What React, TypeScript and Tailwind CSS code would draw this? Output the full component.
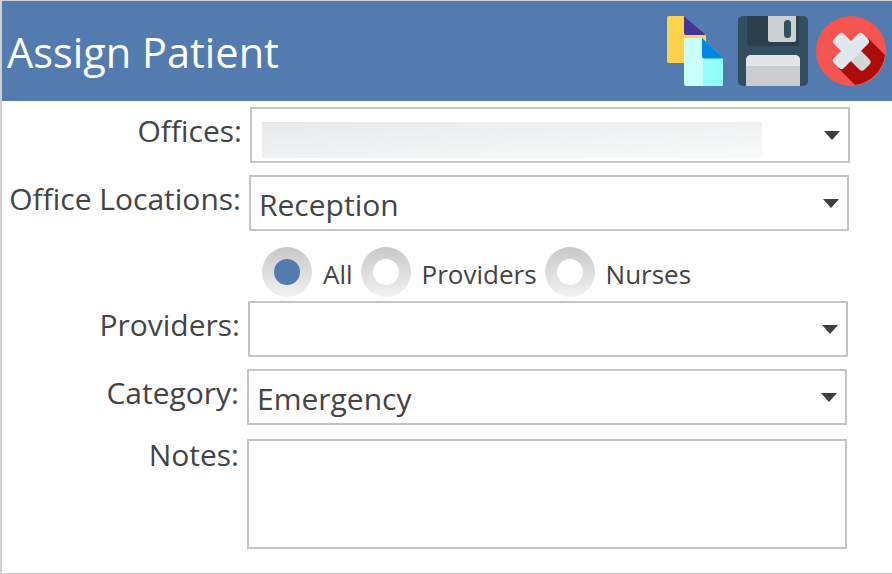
const font = "font-['Open_Sans','Noto_Sans',sans-serif]";

function CopyIcon() {
  return (
    <svg width="56" height="70" viewBox="0 0 56 70" className="shrink-0">
      <path d="M2 0h15l22 19v26a2 2 0 0 1-2 2H2a2 2 0 0 1-2-2V2a2 2 0 0 1 2-2z" fill="#ffd24d" />
      <path d="M17 0l21 18a.6.6 0 0 1-.5 1H19a2 2 0 0 1-2-2z" fill="#463397" />
      <path d="M19 22h16l21 20v26a2 2 0 0 1-2 2H19a2 2 0 0 1-2-2V24a2 2 0 0 1 2-2z" fill="#c8fffb" />
      <path d="M36 42h20v26a2 2 0 0 1-2 2H36z" fill="#90fffa" />
      <path d="M35 22l21 19.500a.6.6 0 0 1-.5 1H37a2 2 0 0 1-2-2z" fill="#0086e0" />
    </svg>
  );
}

function SaveIcon() {
  return (
    <svg width="70" height="70" viewBox="0 0 70 70" className="shrink-0">
      <rect width="70" height="70" rx="5" fill="#334e5f" />
      <path d="M9 0h52v26a4 4 0 0 1-4 4H13a4 4 0 0 1-4-4z" fill="#2b3f4e" />
      <path d="M30 0h28v24a2 2 0 0 1-2 2H32a2 2 0 0 1-2-2z" fill="#cdd0d3" />
      <rect x="46" y="4" width="7" height="18" rx="3.500" fill="#334e5f" />
      <path d="M8 70V44a5 5 0 0 1 5-5h44a5 5 0 0 1 5 5v26z" fill="#cacdd0" />
      <path d="M8 50v-6a5 5 0 0 1 5-5h44a5 5 0 0 1 5 5v6z" fill="#e3e6e7" />
    </svg>
  );
}

function CloseIcon() {
  return (
    <svg width="70" height="70" viewBox="0 0 70 70" className="shrink-0">
      <circle cx="35" cy="35" r="35" fill="#f55550" />
      <path d="M52 22L69 39A35 35 0 0 1 39 69L22 52z" fill="#ad0c0c" />
      <rect x="14.500" y="28" width="41" height="14" rx="3.500" fill="#e2e6ee" transform="rotate(45 35 35)" />
      <rect x="14.500" y="28" width="41" height="14" rx="3.500" fill="#e2e6ee" transform="rotate(-45 35 35)" />
      <path d="M45 35L53.500 43.500a3.500 3.500 0 0 1 0 5L48.500 53.500a3.500 3.500 0 0 1-5 0L35 45z" fill="#d6d6d6" />
    </svg>
  );
}

function Caret() {
  return (
    <svg width="16" height="9" viewBox="0 0 16 9" className="mt-[1px] shrink-0">
      <path d="M0 0h16L8 9z" fill="#3f3f3f" />
    </svg>
  );
}

function SelectRow({ label, value, left, blurred }: { label: string; value?: string; left: string; blurred?: boolean }) {
  return (
    <div className={`flex h-[56px] items-center ${left}`}>
      <div className="w-[240px] -translate-y-[4px] pr-[8px] text-right text-[30px] leading-none text-[#444]">{label}</div>
      <div className="flex h-[56px] w-[600px] items-center border-2 border-[#c4c4c4] pl-[8px] pr-[8px]">
        <div className="flex-1 pt-[4px] text-[30px] leading-none text-[#444]">
          {blurred ? <div className="ml-[2px] mt-[6px] h-[36px] w-[500px] bg-gradient-to-br from-[#e8e9eb] to-[#f9fafa]" /> : value}
        </div>
        <Caret />
      </div>
    </div>
  );
}

function Radio({ label, checked }: { label: string; checked?: boolean }) {
  return (
    <div className="flex items-center">
      <div className="flex h-[50px] w-[50px] items-center justify-center rounded-full bg-gradient-to-b from-[#c8c8c8] to-[#f2f2f2]">
        <div className={`h-[26px] w-[26px] rounded-full ${checked ? "bg-[#537bb0]" : "bg-white"}`} />
      </div>
      <span className="ml-[11px] pt-[4px] text-[26px] leading-none text-[#444]">{label}</span>
    </div>
  );
}

export default function App() {
  return (
    <div className={`${font} h-[574px] w-[892px] overflow-hidden border-b border-l-2 border-t border-[#d0d0d0] bg-white`}>
      <div className="flex h-[100px] items-center justify-between bg-[#537bb0] pl-[5px] pr-[6px]">
        <div className="pt-[4px] text-[41.500px] leading-none text-white">Assign Patient</div>
        <div className="flex items-center">
          <CopyIcon />
          <div className="ml-[15px]"><SaveIcon /></div>
          <div className="ml-[8px]"><CloseIcon /></div>
        </div>
      </div>
      <div className="flex flex-col pt-[6px]">
        <SelectRow label="Offices:" left="ml-[8px]" blurred />
        <div className="mt-[12px]">
          <SelectRow label="Office Locations:" value="Reception" left="ml-[7px]" />
        </div>
        <div className="ml-[260px] mt-[16px] flex h-[50px] gap-[8px]">
          <Radio label="All" checked />
          <Radio label="Providers" />
          <Radio label="Nurses" />
        </div>
        <div className="mt-[4px]">
          <SelectRow label="Providers:" left="ml-[6px]" />
        </div>
        <div className="mt-[12px]">
          <SelectRow label="Category:" value="Emergency" left="ml-[5px]" />
        </div>
        <div className="ml-[5px] mt-[14px] flex">
          <div className="w-[240px] pr-[8px] pt-[1px] text-right text-[30px] leading-[30px] text-[#444]">Notes:</div>
          <div className="h-[110px] w-[600px] border-2 border-[#c4c4c4]" />
        </div>
      </div>
    </div>
  );
}
